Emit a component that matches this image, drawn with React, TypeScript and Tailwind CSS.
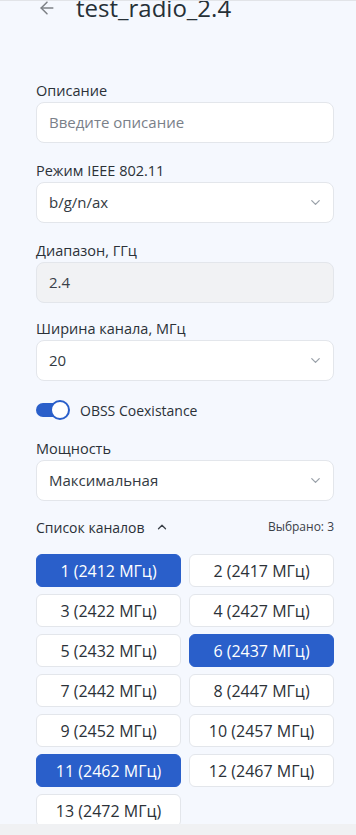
import React, { useState } from "react";
import { ArrowLeft, ChevronDown, ChevronUp } from "lucide-react";

const CHANNELS = [
  { n: 1, f: 2412 },
  { n: 2, f: 2417 },
  { n: 3, f: 2422 },
  { n: 4, f: 2427 },
  { n: 5, f: 2432 },
  { n: 6, f: 2437 },
  { n: 7, f: 2442 },
  { n: 8, f: 2447 },
  { n: 9, f: 2452 },
  { n: 10, f: 2457 },
  { n: 11, f: 2462 },
  { n: 12, f: 2467 },
  { n: 13, f: 2472 },
];

const Label = ({ children }: { children: React.ReactNode }) => (
  <div className="h-5 mb-[1px] text-[14.5px] leading-5 text-[#2b3138]">{children}</div>
);

const SelectBox = ({ value }: { value: string }) => (
  <div className="h-[41px] flex items-center justify-between rounded-lg border border-[#e3e6eb] bg-white pl-3 pr-[10px]">
    <span className="text-[15px] text-[#333a42]">{value}</span>
    <ChevronDown size={15} strokeWidth={2} className="text-[#9aa1a9]" />
  </div>
);

const App = () => {
  const [selected, setSelected] = useState<number[]>([1, 6, 11]);
  const [obss, setObss] = useState(true);

  const toggleChannel = (n: number) => {
    setSelected((s) => (s.includes(n) ? s.filter((x) => x !== n) : [...s, n]));
  };

  return (
    <div
      className="w-[356px] h-[835px] flex flex-col bg-[#f5f8fe] border-t border-[#e2e4e8] overflow-hidden"
      style={{ fontFamily: '"Open Sans", "Noto Sans", sans-serif' }}
    >
      <main className="flex-1 overflow-hidden pl-9 pr-[22px]">
        <header className="mt-[-9px] h-8 flex items-center gap-[19px] pl-[1px]">
          <ArrowLeft size={20} strokeWidth={1.8} className="text-[#7d8186]" />
          <h1 className="text-[24px] leading-8 text-[#263037]">test_radio_2.4</h1>
        </header>

        <section className="mt-[57px] flex flex-col">
          <div className="mb-[18px]">
            <Label>Описание</Label>
            <div className="h-[41px] flex items-center rounded-lg border border-[#e3e6eb] bg-white px-3">
              <span className="text-[15px] text-[#7a8089]">Введите описание</span>
            </div>
          </div>

          <div className="mb-[18px]">
            <Label>Режим IEEE 802.11</Label>
            <SelectBox value="b/g/n/ax" />
          </div>

          <div className="mb-[16px]">
            <Label>Диапазон, ГГц</Label>
            <div className="h-[41px] flex items-center rounded-lg border border-[#e3e6eb] bg-[#f1f2f4] px-3">
              <span className="text-[15px] text-[#3a4048]">2.4</span>
            </div>
          </div>

          <div>
            <Label>Ширина канала, МГц</Label>
            <SelectBox value="20" />
          </div>

          <button
            type="button"
            onClick={() => setObss(!obss)}
            className="mt-[19px] h-5 flex items-center gap-[10px] text-left"
          >
            <span className="relative w-[34px] h-5 flex items-center">
              <span className={`w-[32px] h-[14px] rounded-full ${obss ? "bg-[#2a5fca]" : "bg-[#c4c8ce]"}`} />
              <span
                className={`absolute top-0 w-5 h-5 rounded-full bg-white border-2 ${
                  obss ? "right-0 border-[#2a5fca]" : "left-0 border-[#c4c8ce]"
                }`}
              />
            </span>
            <span className="text-[14px] text-[#2b3138]">OBSS Coexistance</span>
          </button>

          <div className="mt-[19px]">
            <Label>Мощность</Label>
            <SelectBox value="Максимальная" />
          </div>

          <div className="mt-[16px] h-5 flex items-center justify-between">
            <div className="flex items-center gap-[10px]">
              <span className="text-[14px] text-[#2b3138]">Список каналов</span>
              <ChevronUp size={14} strokeWidth={2.2} className="text-[#3a4048]" />
            </div>
            <span className="text-[12px] text-[#3a4048]">Выбрано: {selected.length}</span>
          </div>

          <div className="mt-[17px] grid grid-cols-2 gap-x-2 gap-y-[7px]">
            {CHANNELS.map((c) => {
              const on = selected.includes(c.n);
              return (
                <button
                  key={c.n}
                  type="button"
                  onClick={() => toggleChannel(c.n)}
                  className={`h-[33px] rounded-md border text-[16px] ${
                    on
                      ? "bg-[#2a5fca] border-[#2a5fca] text-white"
                      : "bg-white border-[#e3e6eb] text-[#2b3138]"
                  }`}
                >
                  {c.n} ({c.f} МГц)
                </button>
              );
            })}
          </div>
        </section>
      </main>
      <div className="h-[11px] shrink-0 bg-[#f0f1f3]" />
    </div>
  );
};

export default App;
